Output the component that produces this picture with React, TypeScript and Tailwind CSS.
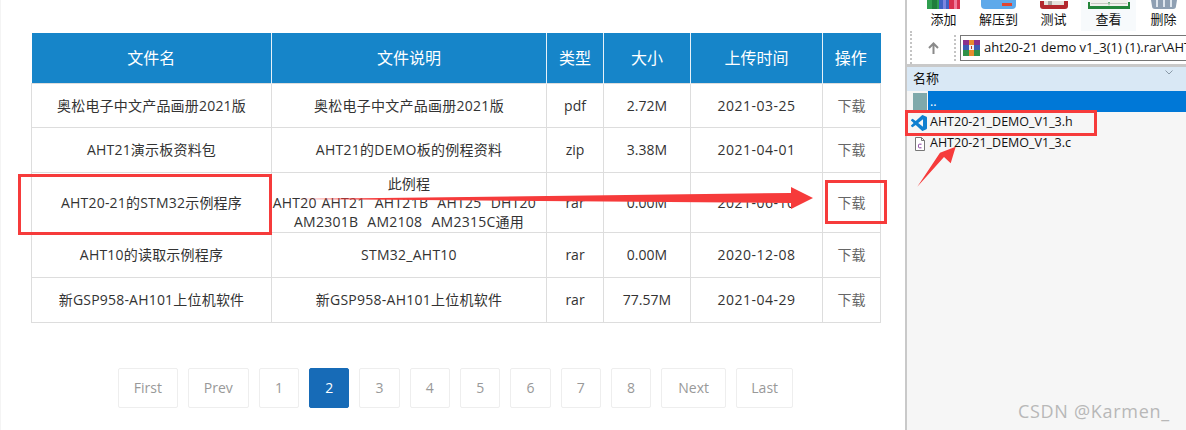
const rows = [
  { name: "奥松电子中文产品画册2021版", desc: ["奥松电子中文产品画册2021版"], type: "pdf", size: "2.72M", date: "2021-03-25", h: "h-[44px]" },
  { name: "AHT21演示板资料包", desc: ["AHT21的DEMO板的例程资料"], type: "zip", size: "3.38M", date: "2021-04-01", h: "h-[45px]" },
  {
    name: "AHT20-21的STM32示例程序",
    desc: ["此例程", "AHT20 AHT21\u00a0\u00a0AHT21B\u00a0\u00a0AHT25\u00a0\u00a0DHT20\u00a0\u00a0", "AM2301B\u00a0\u00a0AM2108\u00a0\u00a0AM2315C通用"],
    type: "rar",
    size: "0.00M",
    date: "2021-06-10",
    h: "h-[60px]",
  },
  { name: "AHT10的读取示例程序", desc: ["STM32_AHT10"], type: "rar", size: "0.00M", date: "2020-12-08", h: "h-[45px]" },
  { name: "新GSP958-AH101上位机软件", desc: ["新GSP958-AH101上位机软件"], type: "rar", size: "77.57M", date: "2021-04-29", h: "h-[45px]" },
];

const pages = [
  { label: "First", w: "w-[60px]" },
  { label: "Prev", w: "w-[61px]" },
  { label: "1", w: "w-[40.3px]" },
  { label: "2", w: "w-[40.3px]", active: true },
  { label: "3", w: "w-[40.3px]" },
  { label: "4", w: "w-[40.3px]" },
  { label: "5", w: "w-[40.3px]" },
  { label: "6", w: "w-[40.3px]" },
  { label: "7", w: "w-[40.3px]" },
  { label: "8", w: "w-[40.3px]" },
  { label: "Next", w: "w-[65px]" },
  { label: "Last", w: "w-[57px]" },
];

const AddIcon = () => (
  <svg width="33" height="9" viewBox="0 0 33 9">
    <rect width="12" height="9" fill="#2f9e4f" />
    <rect x="5" width="5" height="9" fill="#1f7d3c" />
    <rect x="12" width="10" height="9" fill="#3f62c4" />
    <rect x="16" width="3" height="9" fill="#7d86e0" />
    <rect x="22" width="11" height="9" fill="#d8304f" />
    <rect x="27" width="3" height="9" fill="#f07c9c" />
  </svg>
);

const ExtractIcon = () => (
  <svg width="35" height="9" viewBox="0 0 35 9">
    <path d="M0 0h35v5a4 4 0 0 1-4 4H4a4 4 0 0 1-4-4z" fill="#5ea9ea" />
    <rect x="21" y="3" width="10" height="3" fill="#e2452f" />
  </svg>
);

const TestIcon = () => (
  <svg width="28" height="8" viewBox="0 0 28 8">
    <path d="M0 0h28v5a3 3 0 0 1-3 3H3a3 3 0 0 1-3-3z" fill="#b3282d" />
    <path d="M4 0h20v4H4z" fill="#e6e3dc" />
    <path d="M8 0h4v4H8z" fill="#a9a6a0" />
  </svg>
);

const BookIcon = () => (
  <svg width="42" height="9" viewBox="0 0 42 9">
    <rect y="2" width="42" height="7" fill="#23853a" />
    <path d="M2 0h18l1 6H2zM40 0H22l-1 6h19z" fill="#f1f1ec" />
    <path d="M3 3h17v1H3zM22 3h17v1H22z" fill="#c9c9c3" />
  </svg>
);

const TrashIcon = () => (
  <svg width="26" height="9" viewBox="0 0 26 9">
    <path d="M0 0h26l-1 6a3 3 0 0 1-3 3H4a3 3 0 0 1-3-3z" fill="#8fa0b3" />
    <path d="M5 0h2v7H5zM12 0h2v7h-2zM19 0h2v7h-2z" fill="#dfe6ee" />
  </svg>
);

const tools = [
  { label: "添加", icon: <AddIcon /> },
  { label: "解压到", icon: <ExtractIcon /> },
  { label: "测试", icon: <TestIcon /> },
  { label: "查看", icon: <BookIcon />, hover: true },
  { label: "删除", icon: <TrashIcon /> },
];

const RarIcon = () => (
  <svg width="17" height="16" viewBox="0 0 17 16" className="shrink-0">
    <rect width="17" height="5" fill="#8a2f8c" />
    <rect x="6" width="5" height="5" fill="#e88b2e" />
    <rect y="5" width="17" height="5" fill="#3b5cb5" />
    <rect x="6" y="5" width="5" height="5" fill="#f0f0f0" />
    <rect x="8" y="6" width="1" height="3" fill="#c0392b" />
    <rect y="10" width="17" height="6" fill="#2f9147" />
    <rect x="6" y="10" width="5" height="6" fill="#e88b2e" />
  </svg>
);

const UpIcon = () => (
  <svg width="11" height="12" viewBox="0 0 11 12">
    <path d="M5.5 12V2M1 6l4.5-4.5L10 6" fill="none" stroke="#8a8a8a" strokeWidth="2" />
  </svg>
);

const VscodeIcon = () => (
  <svg width="16" height="16" viewBox="0 0 24 24" className="shrink-0">
    <path
      d="M23.15 2.587L18.21.21a1.494 1.494 0 0 0-1.705.29l-9.46 8.63-4.12-3.128a.999.999 0 0 0-1.276.057L.327 7.261A1 1 0 0 0 .326 8.74L3.899 12 .326 15.26a1 1 0 0 0 .001 1.479L1.65 17.94a.999.999 0 0 0 1.276.057l4.12-3.128 9.46 8.63a1.492 1.492 0 0 0 1.704.29l4.942-2.377A1.5 1.5 0 0 0 24 20.06V3.939a1.5 1.5 0 0 0-.85-1.352zm-5.146 14.861L10.826 12l7.178-5.448v10.896z"
      fill="#0f7fd0"
    />
  </svg>
);

const CFileIcon = () => (
  <svg width="12" height="14" viewBox="0 0 12 14" className="shrink-0">
    <path d="M1.5.5h6l3 3v10h-9z" fill="#fff" stroke="#777" />
    <path d="M7.5.5v3h3" fill="none" stroke="#777" />
    <path d="M7.5 7.2H5.5a1 1 0 0 0-1 1v1.6a1 1 0 0 0 1 1h2" fill="none" stroke="#8a3fa0" />
  </svg>
);

export default function App() {
  return (
    <div className="relative flex h-[430px] w-[1186px] overflow-hidden bg-white font-['Open_Sans','Noto_Sans_CJK_SC',sans-serif] text-[14px] text-[#333]">
      <main className="w-[905px] shrink-0 border-l border-[#f4f4f4] pt-[33px] pl-[30px] pr-[25px]">
        <table className="w-[849px] table-fixed border-collapse">
          <colgroup>
            <col className="w-[240px]" />
            <col className="w-[275px]" />
            <col className="w-[57px]" />
            <col className="w-[87px]" />
            <col className="w-[132px]" />
            <col className="w-[58px]" />
          </colgroup>
          <thead>
            <tr className="h-[50px] bg-[#1685c9] text-[16px] font-normal text-white">
              {["文件名", "文件说明", "类型", "大小", "上传时间", "操作"].map((h, i) => (
                <th
                  key={h}
                  className={`font-normal ${i > 0 ? "border-l border-[#e6f1f8]" : ""} ${i === 5 ? "pr-[2px]" : ""}`}
                >
                  {h}
                </th>
              ))}
            </tr>
          </thead>
          <tbody>
            {rows.map((r) => (
              <tr key={r.name} className={r.h}>
                <td className="border border-[#ddd] text-center tracking-[0.2px]">{r.name}</td>
                <td className="border border-[#ddd] text-center leading-[19px] tracking-[0.25px] [word-spacing:0.7px] whitespace-nowrap">
                  {r.desc.map((d) => (
                    <div key={d}>{d}</div>
                  ))}
                </td>
                <td className="border border-[#ddd] text-center">{r.type}</td>
                <td className="border border-[#ddd] text-center">{r.size}</td>
                <td className="border border-[#ddd] text-center tracking-[0.5px]">{r.date}</td>
                <td className="border border-[#ddd] text-center text-[#666]">下载</td>
              </tr>
            ))}
          </tbody>
        </table>

        <nav className="mt-[45px] flex justify-center gap-[10px]">
          {pages.map((p) => (
            <span
              key={p.label}
              className={`flex h-[40px] items-center justify-center rounded-[2px] border text-[14px] ${p.w} ${
                p.active ? "border-[#176bb7] bg-[#176bb7] text-white" : "border-[#eee] text-[#999]"
              }`}
            >
              {p.label}
            </span>
          ))}
        </nav>
      </main>

      <aside className="flex w-[281px] shrink-0 flex-col border-l-2 border-[#c9c9c9] bg-[#f6f6f6] text-[12.5px] text-[#111]">
        <div className="flex h-[31px] bg-white pl-[9px]">
          {tools.map((t) => (
            <div
              key={t.label}
              className={`flex w-[55px] shrink-0 flex-col items-center ${t.hover ? "bg-[#f7fafc]" : ""}`}
            >
              <div className="flex h-[9px] items-end">{t.icon}</div>
              <span className="text-[13px] leading-[20px]">{t.label}</span>
            </div>
          ))}
        </div>

        <div className="flex h-[33px] items-center bg-white pl-[3px]">
          <div className="h-full w-0 border-l-2 border-dotted border-[#c4c4c4]" />
          <span className="flex w-[42px] justify-center">
            <UpIcon />
          </span>
          <div className="h-[26px] w-0 border-l-2 border-dotted border-[#c4c4c4]" />
          <div className="ml-[4px] flex h-[26px] flex-1 items-center gap-[4px] overflow-hidden border border-r-0 border-[#777] pl-[2px] text-[13px] whitespace-nowrap">
            <RarIcon />
            <span>aht20-21 demo v1_3(1) (1).rar\AHT</span>
          </div>
        </div>

        <div className="h-[3px] bg-[#c9c9c9]" />

        <div className="relative flex h-[24px] items-center bg-[#d9e8f5] pl-[6px] text-[13px]">
          名称
          <svg width="8" height="5" viewBox="0 0 8 5" className="absolute top-[3px] right-[13px]">
            <path d="M.5.5L4 4 7.5.5" fill="none" stroke="#8a9aa8" />
          </svg>
        </div>

        <div className="flex h-[21px] items-end bg-[#0078d7] text-white">
          <div className="h-[21px] w-[21px] bg-[#f6f6f6] pt-[2px] pl-[6px]">
            <div className="h-[19px] w-[14px] bg-[#7fa9ab]" />
          </div>
          <span className="pl-[2px] leading-[20px]">..</span>
        </div>

        <div className="flex h-[21px] items-center gap-[3px] pl-[4px]">
          <VscodeIcon />
          <span>AHT20-21_DEMO_V1_3.h</span>
        </div>
        <div className="flex h-[21px] items-center gap-[4px] pl-[7px]">
          <CFileIcon />
          <span>AHT20-21_DEMO_V1_3.c</span>
        </div>
      </aside>

      <div className="absolute top-[174px] left-[18px] h-[61px] w-[254px] border-[3px] border-[#f63b3b]" />
      <div className="absolute top-[180px] left-[825px] h-[44px] w-[62px] border-[3px] border-[#f63b3b]" />
      <div className="absolute top-[110px] left-[905px] h-[26px] w-[192px] border-[3px] border-[#f63b3b]" />

      <svg width="1186" height="430" viewBox="0 0 1186 430" className="pointer-events-none absolute top-0 left-0">
        <polygon points="296,199 791,193 791,187 813,198 791,209 791,203" fill="#f63b3b" />
        <polygon points="955.7,146.7 950.7,163.3 944,157 917.3,186.7 940,152.7" fill="#f63b3b" />
      </svg>

      <span className="absolute top-[399px] left-[1018px] text-[18px] leading-[24px] tracking-[0.7px] text-[#b8b8b8]">
        CSDN @Karmen_
      </span>
    </div>
  );
}
